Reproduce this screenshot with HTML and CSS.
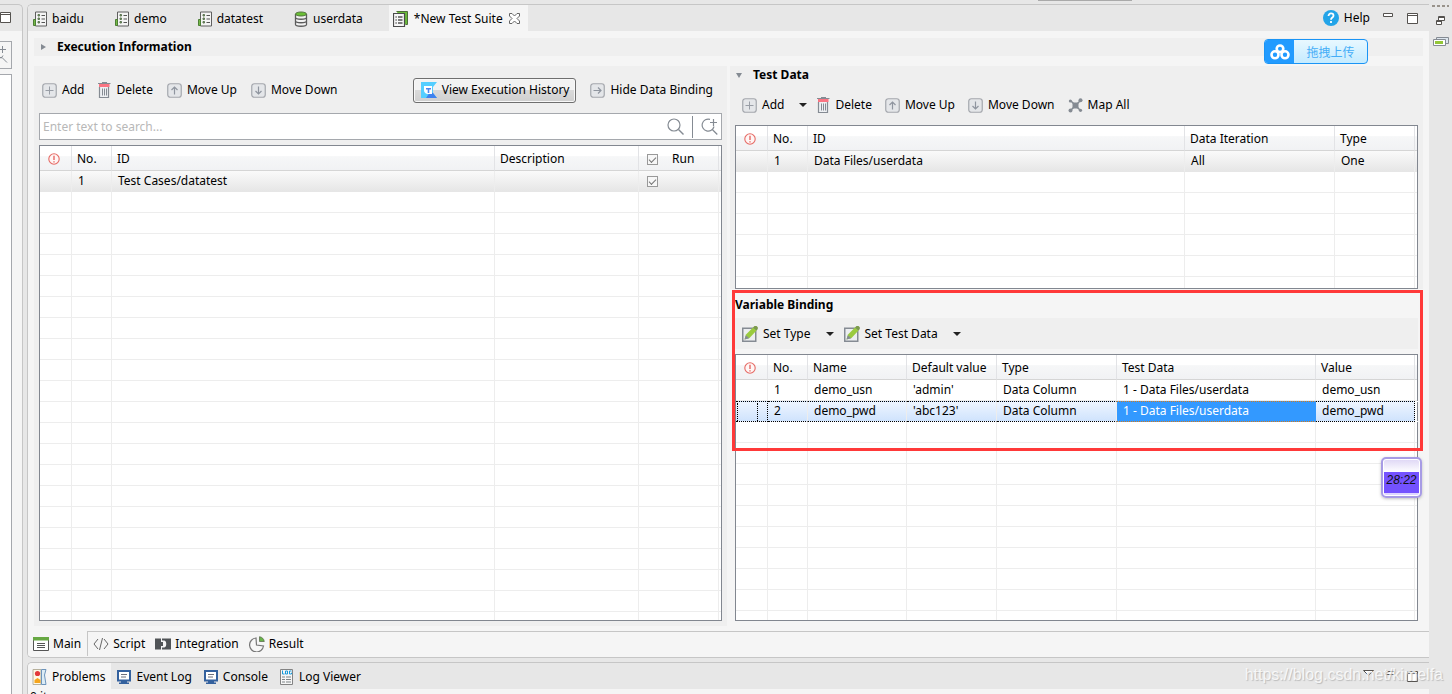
FILE: index.html
```html
<!DOCTYPE html>
<html lang="en">
<head>
<meta charset="utf-8">
<title>New Test Suite</title>
<link rel="stylesheet" href="styles.css">
</head>
<body>
<svg class="defs" aria-hidden="true">
  <symbol id="case" viewBox="0 0 14 16"><path d="M2.5 1h11v14h-11z" fill="#f4f4f4" stroke="#5f5f5f"/><path d="M0.5 8.5h2v6h-2z" fill="#76b947" stroke="#4c7f35"/><path d="M8.5 4.500H12M8.500 8H12M8.500 11.500H12" stroke="#555"/><path d="M5 3.500h1.500v1.500H5zM5 7h1.500v1.500H5zM5 10.500h1.500v1.500H5z" fill="#76a75a" stroke="#5f7755"/></symbol>
  <symbol id="db" viewBox="0 0 14 16"><path d="M1.5 3v10.5c0 2.300 11 2.300 11 0V3" fill="#f2f2f2" stroke="#5c5c5c" stroke-width="1.300"/><path d="M1.500 6.500c0 2.300 11 2.300 11 0M1.500 10c0 2.300 11 2.300 11 0" fill="none" stroke="#5c5c5c" stroke-width="1.300"/><ellipse cx="7" cy="3" rx="5.500" ry="2" fill="#69be35" stroke="#55753f"/></symbol>
  <symbol id="suite" viewBox="0 0 15 16"><path d="M3.500.5h11v13h-2" fill="#6bbb3b" stroke="#4f6f3b"/><path d="M.5 2.500h11v13H.5z" fill="#f7f7f7" stroke="#4b4b4b" stroke-width="1.200"/><path d="M5 6h4.500M5 9h4.500M5 12h4.500M2.500 6h1.200M2.500 9h1.200M2.500 12h1.200" stroke="#555" stroke-width="1.300"/></symbol>
  <symbol id="close" viewBox="0 0 11 11"><path d="M.5.5h2.500L5.500 3 8 .5h2.500V3L8 5.500 10.500 8v2.500H8L5.500 8 3 10.500H.5V8L3 5.500.5 3z" fill="#fff" stroke="#666"/></symbol>
  <symbol id="frame" viewBox="0 0 15 15"><rect x=".75" y=".75" width="13.500" height="13.500" rx="2.500" fill="#e4e6e9" stroke="#a4a7ad" stroke-width="1.200"/></symbol>
  <symbol id="add" viewBox="0 0 15 15"><use href="#frame" width="15" height="15"/><path d="M7.500 3.500v8M3.500 7.500h8" stroke="#999ea6"/></symbol>
  <symbol id="up" viewBox="0 0 15 15"><use href="#frame" width="15" height="15"/><path d="M7.500 11.500v-7M4.500 7l3-3 3 3" fill="none" stroke="#8f959f" stroke-width="1.200"/></symbol>
  <symbol id="down" viewBox="0 0 15 15"><use href="#frame" width="15" height="15"/><path d="M7.500 3.500v7M4.500 8l3 3 3-3" fill="none" stroke="#8f959f" stroke-width="1.200"/></symbol>
  <symbol id="right" viewBox="0 0 15 15"><use href="#frame" width="15" height="15"/><path d="M3.500 7.500h7M8 4.500l3 3-3 3" fill="none" stroke="#8f959f" stroke-width="1.200"/></symbol>
  <symbol id="trash" viewBox="0 0 13 16"><path d="M1.500 5v10.500h9V5" fill="#eef0f3" stroke="#858b93" stroke-width="1.200"/><path d="M4.500 6.500v7M6.500 6.500v7M8.500 6.500v7" stroke="#858b93"/><path d="M1 2h10.500v3H1z" fill="#fa7583"/><path d="M4 .5h5M0 1.500h12.500" stroke="#858b93"/></symbol>
  <symbol id="map" viewBox="0 0 15 15"><path d="M2.500 2.500l10 10M12.500 2.500l-10 10" stroke="#858b93" stroke-width="1.500"/><path d="M4.500 4.500h6v6h-6z" fill="#858b93"/><circle cx="2.300" cy="3" r="1.500" fill="#858b93"/><circle cx="12.500" cy="2.300" r="2" fill="#858b93"/><circle cx="2.500" cy="12.500" r="2" fill="#858b93"/><circle cx="12.500" cy="12.300" r="1.600" fill="#858b93"/></symbol>
  <symbol id="edit" viewBox="0 0 16 16"><path d="M.75 2.250h13v13h-13z" fill="#eceef0" stroke="#858b93" stroke-width="1.500"/><path d="M2.500 13.500l1.500-5L11 1.500 14.500 4.500 7.500 12z" fill="#9acb3e"/><path d="M11 1.500L12.500 0h2l1.300 1.300v1.700l-1.300 1.500z" fill="#7c9a4c"/><path d="M2.500 13.500l1.300-4.300 3.500 3z" fill="#858b93"/></symbol>
  <symbol id="caret" viewBox="0 0 8 4"><path d="M0 0h8L4 4z" fill="#222"/></symbol>
  <symbol id="alert" viewBox="0 0 12 12"><circle cx="6" cy="6" r="5.200" fill="#fff6f5" stroke="#e66a65" stroke-width="1.100"/><path d="M6 2.700v4.300M6 8.200v1.300" stroke="#e2504b" stroke-width="1.200"/></symbol>
  <symbol id="search" viewBox="0 0 17 17"><circle cx="7" cy="7" r="6" fill="none" stroke="#858b93" stroke-width="1.200"/><path d="M11.500 11.500l5 5" stroke="#858b93" stroke-width="1.400"/></symbol>
  <symbol id="search-add" viewBox="0 0 17 17"><path d="M9 1.400A6 6 0 1 0 13 8.500M11.300 11.500l5 5M12.500 1v7M9 4.500h7" fill="none" stroke="#858b93" stroke-width="1.200"/></symbol>
  <symbol id="kat" viewBox="0 0 16 16"><path d="M0 0h16l-4 5v6l4 5H0z" fill="#54ceff"/><path d="M9 10l3 1 4 5H5z" fill="#3f82ee"/><path d="M3 4h8v8H6.500C4 11.500 3 10 3 8z" fill="#fff"/><path d="M5 6h5v1.500H8.300V11H6.700V7.500H5z" fill="#4b86ee"/></symbol>
  <symbol id="help" viewBox="0 0 16 16"><circle cx="8" cy="8" r="8" fill="#23a4e8"/><path d="M5.500 6c0-3.500 5-3.200 5-.3C10.500 7.600 8 7.500 8 9.700M8 11v2" fill="none" stroke="#fff" stroke-width="1.800"/></symbol>
  <symbol id="max" viewBox="0 0 11 11"><path d="M.5.5h10v10H.5zM.5 2.500h10" fill="#fff" stroke="#55524f"/></symbol>
  <symbol id="min" viewBox="0 0 11 4"><path d="M.5.5h9v3h-9z" fill="#fff" stroke="#55524f"/></symbol>
  <symbol id="main" viewBox="0 0 16 14"><path d="M.5 1h15v12.500H.5z" fill="#fff" stroke="#555"/><path d="M0 0h16v3.500H0z" fill="#67a843"/><path d="M4 6.500h8M4 8.500h8M4 10.500h8" stroke="#555"/></symbol>
  <symbol id="code" viewBox="0 0 16 12"><path d="M5 1L1 6l4 5M11 1l4 5-4 5M9.500 0l-3 12" fill="none" stroke="#666"/></symbol>
  <symbol id="plug" viewBox="0 0 16 12"><path d="M0 .5h6v3.500h2v4H6v3.500H0zM7 .5h9v11H7v-2h2c3 0 3-7 0-7H7z" fill="#505457"/></symbol>
  <symbol id="pie" viewBox="0 0 16 16"><path d="M7 2a7 7 0 1 0 7.500 8L7.500 9z" fill="#f7f7f7" stroke="#777" stroke-width="1.200"/><path d="M10.500.7C13 1 15 3 15.300 5.500h-4.800z" fill="#68b34a" stroke="#536348" stroke-width=".7"/></symbol>
  <symbol id="problem" viewBox="0 0 14 16"><path d="M.5.5h8v15h-8z" fill="#fff8e5" stroke="#b7b09c"/><path d="M9 .5h4.500L12 6l1.500 9.500H9z" fill="#dcecf5" stroke="#6d94bb"/><circle cx="5" cy="4.500" r="2.600" fill="#e33a3a"/><path d="M2 14v-3l3-2 3 2v3z" fill="#f5a51d"/></symbol>
  <symbol id="screen" viewBox="0 0 14 14"><path d="M1 1h12v9.500H1z" fill="#fff" stroke="#34619e" stroke-width="2"/><path d="M4 4.500h6M4 7h5" stroke="#6d707c"/><path d="M4 11h6v1.500h2V14H2v-1.500h2z" fill="#34619e"/></symbol>
  <symbol id="log" viewBox="0 0 14 16"><path d="M.5.5h12v15H.5z" fill="#f6f6f6" stroke="#838383"/><path d="M2.500 1.500v3.500h2M5.500 2h2v3h-2zM11.500 2h-2v3h2V3.700" fill="none" stroke="#199bdb"/><path d="M2 8h3M6 8h5M2 10.500h3M6 10.500h5M2 13h3M6 13h5" stroke="#7e8588"/></symbol>
  <symbol id="cloud" viewBox="0 0 20 16"><g fill="none" stroke="#fff" stroke-width="2.600"><circle cx="10" cy="4.800" r="3.300"/><circle cx="5" cy="10.800" r="3.500"/><circle cx="15" cy="10.800" r="3.500"/></g></symbol>
</svg>

<div class="shell">
  <aside class="side">
    <div class="side-head"><svg width="11" height="11"><use href="#max"/></svg></div>
    <div class="side-body">
      <div class="side-search"><svg width="9" height="17" viewBox="0 0 9 17"><path d="M2.500 0v7M0 3.500h6M0 11.500h2l5 5M3 9.500l-2 3" fill="none" stroke="#858b93"/></svg></div>
      <div class="side-tree"></div>
    </div>
  </aside>

  <div class="center">
    <main class="editor">
      <nav class="tabs" aria-label="Editors">
        <button class="tab"><svg width="14" height="16"><use href="#case"/></svg>baidu</button>
        <button class="tab"><svg width="14" height="16"><use href="#case"/></svg>demo</button>
        <button class="tab"><svg width="14" height="16"><use href="#case"/></svg>datatest</button>
        <button class="tab"><svg width="14" height="16"><use href="#db"/></svg>userdata</button>
        <button class="tab active"><svg width="15" height="16"><use href="#suite"/></svg>*New Test Suite<svg width="11" height="11"><use href="#close"/></svg></button>
        <div class="tab-tools">
          <button class="tool help"><svg width="16" height="16"><use href="#help"/></svg>Help</button>
          <button class="win high" aria-label="Minimize"><svg width="11" height="4"><use href="#min"/></svg></button>
          <button class="win" aria-label="Maximize"><svg width="11" height="11"><use href="#max"/></svg></button>
        </div>
      </nav>

      <div class="form">
        <h2 class="section"><svg width="5" height="6" viewBox="0 0 5 6"><path d="M0 0l5 3-5 3z" fill="#858b93"/></svg>Execution Information</h2>
        <div class="columns">
          <section class="panel cases">
            <div class="toolbar">
              <button class="tool"><svg width="15" height="15"><use href="#add"/></svg>Add</button>
              <button class="tool"><svg width="13" height="16"><use href="#trash"/></svg>Delete</button>
              <button class="tool"><svg width="15" height="15"><use href="#up"/></svg>Move Up</button>
              <button class="tool"><svg width="15" height="15"><use href="#down"/></svg>Move Down</button>
              <button class="tool history"><svg width="16" height="16"><use href="#kat"/></svg>View Execution History</button>
              <button class="tool"><svg width="15" height="15"><use href="#right"/></svg>Hide Data Binding</button>
            </div>
            <div class="search">
              <input type="text" aria-label="Search" placeholder="Enter text to search...">
              <button aria-label="Search"><svg width="17" height="17"><use href="#search"/></svg></button>
              <button class="split" aria-label="Advanced search"><svg width="17" height="17"><use href="#search-add"/></svg></button>
            </div>
            <div class="grid-box">
              <table class="grid">
                <colgroup><col class="w32"><col class="w40"><col><col class="w144"><col class="w80"><col class="w1"></colgroup>
                <thead><tr><th class="mark"><svg width="12" height="12"><use href="#alert"/></svg></th><th>No.</th><th>ID</th><th>Description</th><th><label class="check"><input type="checkbox" checked>Run</label></th><th></th></tr></thead>
                <tbody>
                  <tr class="hot"><td></td><td>1</td><td>Test Cases/datatest</td><td></td><td><label class="check"><input type="checkbox" checked aria-label="Run datatest"></label></td><td></td></tr>
                  <tr class="filler"><td></td><td></td><td></td><td></td><td></td><td></td></tr>
                </tbody>
              </table>
            </div>
          </section>

          <div class="binding">
            <section class="panel data">
              <h2 class="title"><svg width="6" height="5" viewBox="0 0 6 5"><path d="M0 0h6L3 5z" fill="#858b93"/></svg>Test Data</h2>
              <div class="toolbar">
                <button class="tool"><svg width="15" height="15"><use href="#add"/></svg>Add<svg class="caret" width="8" height="4"><use href="#caret"/></svg></button>
                <button class="tool"><svg width="13" height="16"><use href="#trash"/></svg>Delete</button>
                <button class="tool"><svg width="15" height="15"><use href="#up"/></svg>Move Up</button>
                <button class="tool"><svg width="15" height="15"><use href="#down"/></svg>Move Down</button>
                <button class="tool"><svg width="15" height="15"><use href="#map"/></svg>Map All</button>
              </div>
              <div class="grid-box">
                <table class="grid">
                  <colgroup><col class="w32"><col class="w40"><col><col class="w150"><col class="w80"><col class="w1"></colgroup>
                  <thead><tr><th class="mark"><svg width="12" height="12"><use href="#alert"/></svg></th><th>No.</th><th>ID</th><th>Data Iteration</th><th>Type</th><th></th></tr></thead>
                  <tbody>
                    <tr class="hot"><td></td><td>1</td><td>Data Files/userdata</td><td>All</td><td>One</td><td></td></tr>
                    <tr class="filler"><td></td><td></td><td></td><td></td><td></td><td></td></tr>
                  </tbody>
                </table>
              </div>
            </section>

            <section class="variables">
              <h2 class="title">Variable Binding</h2>
              <div class="toolbar">
                <button class="tool"><svg width="16" height="16"><use href="#edit"/></svg>Set Type<svg class="caret" width="8" height="4"><use href="#caret"/></svg></button>
                <button class="tool"><svg width="16" height="16"><use href="#edit"/></svg>Set Test Data<svg class="caret" width="8" height="4"><use href="#caret"/></svg></button>
              </div>
              <div class="grid-box">
                <table class="grid">
                  <colgroup><col class="w32"><col class="w40"><col class="w100"><col class="w90"><col class="w120"><col><col class="w100"><col class="w1"></colgroup>
                  <thead><tr><th class="mark"><svg width="12" height="12"><use href="#alert"/></svg></th><th>No.</th><th>Name</th><th>Default value</th><th>Type</th><th>Test Data</th><th>Value</th><th></th></tr></thead>
                  <tbody>
                    <tr><td></td><td>1</td><td>demo_usn</td><td>'admin'</td><td>Data Column</td><td>1 - Data Files/userdata</td><td>demo_usn</td><td></td></tr>
                    <tr class="selected"><td><span class="focus"></span></td><td>2</td><td>demo_pwd</td><td>'abc123'</td><td>Data Column</td><td class="cell-on">1 - Data Files/userdata</td><td>demo_pwd</td><td></td></tr>
                    <tr class="filler"><td></td><td></td><td></td><td></td><td></td><td></td><td></td><td></td></tr>
                  </tbody>
                </table>
              </div>
              <div class="outline"></div>
              <div class="timer">28:22</div>
            </section>
          </div>
        </div>
      </div>

      <nav class="pages" aria-label="Pages">
        <button class="page on"><svg width="16" height="14"><use href="#main"/></svg>Main</button>
        <button class="page"><svg width="16" height="12"><use href="#code"/></svg>Script</button>
        <button class="page"><svg width="16" height="12"><use href="#plug"/></svg>Integration</button>
        <button class="page"><svg width="16" height="16"><use href="#pie"/></svg>Result</button>
      </nav>
      <button class="upload"><span class="upload-icon"><svg width="20" height="16"><use href="#cloud"/></svg></span><span class="upload-text">拖拽上传</span></button>
    </main>

    <section class="views">
      <nav class="view-tabs" aria-label="Views">
        <button class="view on"><svg width="15" height="16"><use href="#problem"/></svg>Problems</button>
        <button class="view"><svg width="14" height="14"><use href="#screen"/></svg>Event Log</button>
        <button class="view"><svg width="14" height="14"><use href="#screen"/></svg>Console</button>
        <button class="view"><svg width="14" height="16"><use href="#log"/></svg>Log Viewer</button>
        <div class="view-tools">
          <button class="win high" aria-label="View menu"><svg width="11" height="6" viewBox="0 0 11 6"><path d="M.5.5h10l-5 5z" fill="#fff" stroke="#55524f"/></svg></button>
          <button class="win high" aria-label="Minimize view"><svg width="11" height="4"><use href="#min"/></svg></button>
          <button class="win" aria-label="Maximize view"><svg width="11" height="11"><use href="#max"/></svg></button>
        </div>
      </nav>
      <div class="view-body">0 items</div>
    </section>
  </div>

  <aside class="rail">
    <div class="grip"></div>
    <button class="win" aria-label="Restore"><svg width="9" height="9" viewBox="0 0 9 9"><path d="M2.500.5h6v4h-6zM2.500 1.500h6M.5 4.500h5v4h-5zM.5 5.500h5" fill="#fff" stroke="#55524f"/></svg></button>
    <button class="win" aria-label="Job progress"><svg width="16" height="10" viewBox="0 0 16 10"><path d="M3.500.5h12v6h-12z" fill="#dde6ee" stroke="#858b93"/><path d="M.5 2.500h12v6H.5z" fill="#fff" stroke="#858b93"/><path d="M2 4h8v3H2z" fill="#93c638"/></svg></button>
  </aside>
</div>
<div class="top-mark"></div>
<div class="watermark">https://blog.csdn.net/kimelfa</div>
</body>
</html>
```
FILE: styles.css
```css
* { box-sizing: border-box; }
body {
  margin: 0;
  background: #e7e7e7;
  color: #000;
  font: 12px/16px "Noto Sans", "Noto Sans CJK SC", sans-serif;
}
button { margin: 0; padding: 0; border: 0; background: none; color: inherit; font: inherit; white-space: nowrap; }
svg { display: block; flex: none; }
h2 { margin: 0; font-size: 12px; line-height: 18px; font-weight: 700; }
.defs { position: absolute; width: 0; height: 0; }

.shell { display: flex; height: 100vh; padding-top: 4px; overflow: hidden; }

.side { display: flex; flex-direction: column; width: 23px; border: solid #c6c6c6; border-width: 1px 1px 0 0; border-radius: 0 5px 0 0; }
.side-head { height: 26px; padding-top: 7px; }
.side-body { display: flex; flex-direction: column; flex: 1; gap: 5px; padding: 10px 10px 0 0; background: #f5f5f5; }
.side-search { height: 28px; padding-top: 4px; border: solid #a5a8ad; border-width: 1px 1px 1px 0; }
.side-tree { flex: 1; background: #fff; border: solid #a5a8ad; border-width: 1px 1px 0 0; }

.center { display: flex; flex-direction: column; flex: 1; min-width: 0; gap: 4px; margin-left: 4px; }
.editor { position: relative; display: flex; flex-direction: column; flex: 1; min-height: 0; border: solid #c6c6c6; border-width: 1px 0 1px 1px; border-radius: 5px 0 0 5px; background: #f5f5f5; overflow: hidden; }

.tabs { display: flex; flex: none; height: 26px; background: #e7e7e7; }
.tab { display: flex; align-items: center; gap: 5px; padding: 1px 26px 0 5px; }
.tab.active { gap: 6px; padding: 1px 8px 0 4px; background: #f5f5f5; }
.tab-tools { display: flex; align-items: center; gap: 13px; margin-left: auto; padding-right: 11px; }
.win { display: flex; align-items: center; }
.win.high { padding-bottom: 6px; }

.form { display: flex; flex-direction: column; flex: 1; min-height: 0; gap: 10px; padding: 7px 6px 5px; }
.section { display: flex; align-items: center; gap: 11px; padding-left: 7px; background: #efefef; }
.columns { display: grid; grid-template-columns: 1fr 1fr; gap: 3px; flex: 1; min-height: 0; }
.panel { display: flex; flex-direction: column; background: #efefef; }
.cases { padding: 11px 5px 5px; }
.binding { display: flex; flex-direction: column; min-height: 0; }

.toolbar { display: flex; align-items: center; gap: 13px; height: 26px; flex: none; }
.tool { display: flex; align-items: center; gap: 5px; height: 24px; }
.caret { margin: 0 -3px 0 10px; }
.cases .toolbar { gap: 14px; padding: 0 9px 0 3px; }
.history { height: 25px; margin-left: auto; padding: 0 6px 0 7px; border: 1px solid #6f6f6f; border-radius: 3px; background: linear-gradient(#f2f2f2 48%, #dadada 50%, #cfcfcf); box-shadow: inset 0 0 0 1px #f8f8f8; }

.search { display: flex; align-items: center; flex: none; height: 27px; margin: 10px 0 5px; border: 1px solid #a5a8ad; background: #fff; }
.search input { flex: 1; min-width: 0; height: 24px; padding: 0 3px; border: 0; outline: 0; background: none; font: inherit; }
.search input::placeholder { color: #b8b8b8; opacity: 1; }
.search button { display: flex; align-items: center; height: 22px; padding: 0 8px; }
.search .split { padding-right: 3px; border-left: 1px solid #858b93; }

.grid-box { flex: 1; min-height: 0; border: 1px solid #828790; background: #fff; }
.grid { width: 100%; height: 100%; table-layout: fixed; border-collapse: separate; border-spacing: 0; }
.w1 { width: 2px; }
.w32 { width: 32px; }
.w40 { width: 40px; }
.w80 { width: 80px; }
.w90 { width: 90px; }
.w100 { width: 99px; }
.w120 { width: 120px; }
.w144 { width: 144px; }
.w150 { width: 150px; }
th { height: 25px; padding: 2px 5px 0; border-right: 1px solid #e2e3e6; border-bottom: 1px solid #d5d5d5; background: linear-gradient(#fff 42%, #f6f7f8 44%, #f1f2f4); font-weight: 400; text-align: left; white-space: nowrap; }
td { height: 21px; padding: 0 6px; border-right: 1px solid #ededed; border-bottom: 1px solid #ededed; white-space: nowrap; }
th:last-child, td:last-child { padding: 0; border-right: 0; }
th.mark { padding: 2px 0 0 8px; }
.hot td { background: linear-gradient(#fafafa, #e6e6e6); border-bottom-color: #e6e6e6; }
.filler td { height: auto; border-bottom: 0; background: repeating-linear-gradient(#fff 0 20px, #ededed 20px 21px); }
.selected td { padding-bottom: 2px; border-top: 1px dotted #000; border-bottom: 1px dotted #000; background: linear-gradient(#eef5ff, #cfe3fd); }
.selected td:first-child { padding: 0 0 0 1px; border-right-style: dotted; border-right-color: #000; }
.focus { display: block; width: 21px; height: 18px; border: dotted #000; border-width: 0 1px; }
.selected td:nth-last-child(2) { border-right: 1px dotted #000; }
.selected td:last-child { padding: 0; border-color: #fff; background: #fff; }
.selected .cell-on { border-color: #d47a1b; border-right-color: #3399ff; background: #3399ff; color: #fff; }
.check { display: flex; align-items: center; gap: 14px; padding-left: 3px; }
td .check { padding-left: 2px; }
.check input { appearance: none; width: 11px; height: 11px; margin: 0; border: 1px solid #999; background: #f7f7f7; }
.check input::before { content: ""; display: block; width: 6px; height: 3px; margin: 2px 1px; border: solid #777; border-width: 0 0 1px 1px; transform: rotate(-45deg); }

.data { flex: none; height: 223px; padding: 0 5px; }
.title { display: flex; align-items: center; gap: 11px; }
.data .title { padding-left: 1px; }
.data .toolbar { margin: 8px 0 7px; padding-left: 7px; }
.variables { position: relative; display: flex; flex-direction: column; flex: 1; min-height: 0; padding: 7px 5px 5px; }
.variables .title { margin-bottom: 4px; }
.variables .toolbar { height: 31px; margin-bottom: 5px; padding-left: 7px; background: #efefef; }
.outline { position: absolute; top: 1px; left: 2px; right: 0; height: 161px; border: 3px solid #ff3939; pointer-events: none; }
.timer { position: absolute; top: 168px; right: 1px; width: 41px; height: 41px; padding: 13px 0 0; border: 2px solid #a79be5; border-radius: 5px; background: linear-gradient(#ded6f5, #fff 36%, #7452ff 36% 92%, #ddd5ff 92%); box-shadow: inset 0 0 0 1px #fff, 0 1px 3px #8888; color: #111; font: italic 12px/16px "Liberation Sans", Arial, sans-serif; text-align: center; }

.pages { display: flex; flex: none; height: 26px; border-top: 1px solid #c6c6c6; }
.page { display: flex; align-items: center; gap: 4px; padding: 0 5px; height: 23px; }
.page.on { height: 25px; margin-top: -1px; padding-right: 6px; border-right: 1px solid #c6c6c6; background: #f5f5f5; }
.upload { position: absolute; top: 34px; right: 61px; display: flex; width: 104px; height: 25px; border: 1px solid #1a94f5; border-radius: 4px; background: linear-gradient(#e8f8ff, #c5ebff); overflow: hidden; }
.upload-icon { display: flex; align-items: center; justify-content: center; width: 29px; height: 23px; background: #229bff; }
.upload-text { flex: 1; color: #44adf7; font-family: "Noto Sans CJK SC", sans-serif; line-height: 23px; text-align: center; }

.views { flex: none; height: 32px; border: solid #c6c6c6; border-width: 1px 0 0 1px; border-radius: 5px 0 0 0; overflow: hidden; }
.view-tabs { display: flex; height: 26px; }
.view { display: flex; align-items: center; gap: 5px; padding: 1px 6px 0; }
.view.on { padding: 1px 6px 0 4px; background: #f5f5f5; }
.view-tools { display: flex; align-items: center; gap: 11px; margin-left: auto; padding-right: 11px; }
.view-body { padding-left: 2px; background: #f5f5f5; }

.rail { display: flex; flex-direction: column; align-items: center; gap: 12px; width: 23px; padding-top: 1px; }
.grip { width: 17px; height: 2px; margin-bottom: -3px; background: repeating-linear-gradient(90deg, #99938b 0 3px, #0000 3px 5px); }
.top-mark { position: absolute; top: 0; right: 320px; width: 94px; height: 1px; background: #aaa; }
.watermark { position: absolute; right: 9px; bottom: 9px; color: #fffc; font: 16px/20px "Liberation Sans", Arial, sans-serif; text-shadow: 1px 1px 1px #bbb; pointer-events: none; }
```
